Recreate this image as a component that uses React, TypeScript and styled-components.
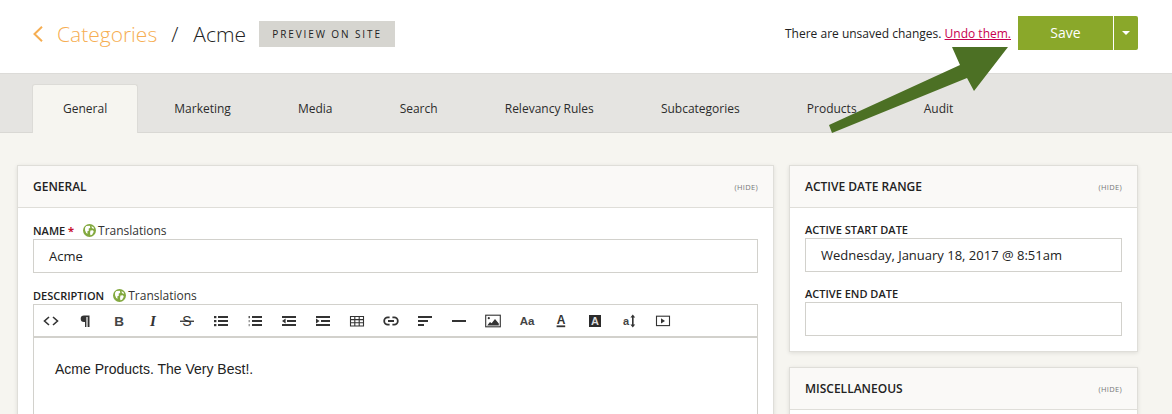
import React from 'react';
import styled, { createGlobalStyle } from 'styled-components';

const GlobalStyle = createGlobalStyle`
  html, body {
    margin: 0;
    padding: 0;
    height: 414px;
    overflow: hidden;
    background: #f6f5f0;
    font-family: "Open Sans", "Liberation Sans", sans-serif;
    color: #222;
  }
  * { box-sizing: border-box; }
`;

const TABS = ['General', 'Marketing', 'Media', 'Search', 'Relevancy Rules', 'Subcategories', 'Products', 'Audit'];

const Globe = () => (
  <GlobeSvg viewBox="0 0 14 14">
    <circle cx="7" cy="7" r="7" fill="#83a93f" />
    <path d="M3.6 2.2 7.4 2 7.8 4 6 5.2 6.4 7 4.6 8 5 10.6 3.4 9.6 2.2 6.6 2.2 4Z" fill="#fff" />
    <path d="M8 7 10.8 6.8 11.6 8.4 9.8 11.6 8 12 7.6 9.6Z" fill="#fff" />
    <path d="M9.2 2.2 11.6 3.8 11.8 5.4 9.6 4.4Z" fill="#fff" />
  </GlobeSvg>
);

const icons: React.ReactNode[] = [
  <path key="code" d="M6 4 1.5 8 6 12M10 4l4.5 4-4.5 4" fill="none" stroke="#333" strokeWidth="1.6" />,
  <path key="para" d="M12.5 2.5H7a3.3 3.3 0 0 0 0 6.6h1V14h1.4V4h1.2v10h1.9Z" fill="#333" />,
  <text key="b" x="8" y="13" textAnchor="middle" fontFamily="Liberation Sans" fontWeight="700" fontSize="13.5" fill="#444">B</text>,
  <text key="i" x="8" y="13" textAnchor="middle" fontFamily="Liberation Serif" fontWeight="700" fontStyle="italic" fontSize="15" fill="#333">I</text>,
  <g key="s">
    <text x="8" y="13" textAnchor="middle" fontFamily="Liberation Sans" fontSize="14" fill="#333">S</text>
    <rect x="1" y="7.6" width="14" height="1.3" fill="#333" />
  </g>,
  <g key="ul" fill="#333">
    <rect x="1" y="3" width="2.4" height="2.2" /><rect x="1" y="7" width="2.4" height="2.2" /><rect x="1" y="11" width="2.4" height="2.2" />
    <rect x="5" y="3" width="10" height="2" /><rect x="5" y="7" width="10" height="2" /><rect x="5" y="11" width="10" height="2" />
  </g>,
  <g key="ol" fill="#333">
    <rect x="1.6" y="3" width="1.2" height="2.2" /><rect x="1.6" y="7" width="1.2" height="2.2" opacity=".6" /><rect x="1.6" y="11" width="1.2" height="2.2" opacity=".6" />
    <rect x="5" y="3" width="10" height="2" /><rect x="5" y="7" width="10" height="2" /><rect x="5" y="11" width="10" height="2" />
  </g>,
  <g key="outdent" fill="#333">
    <rect x="1" y="3" width="14" height="2" /><rect x="6" y="7" width="9" height="2" /><rect x="1" y="11" width="14" height="2" />
    <path d="M4.6 5.6v4.8L1 8Z" />
  </g>,
  <g key="indent" fill="#333">
    <rect x="1" y="3" width="14" height="2" /><rect x="6" y="7" width="9" height="2" /><rect x="1" y="11" width="14" height="2" />
    <path d="M1 5.6v4.8L4.6 8Z" />
  </g>,
  <path key="table" d="M1.5 3.5h13v9.5h-13ZM1.5 6.6h13M1.5 9.8h13M5.8 3.5V13M10.2 3.5V13" fill="none" stroke="#333" strokeWidth="1.1" />,
  <path key="link" d="M6.6 4.4H4.8a3.6 3.6 0 0 0 0 7.2h1.8M9.4 4.4h1.8a3.6 3.6 0 0 1 0 7.2H9.4M5 8h6" fill="none" stroke="#333" strokeWidth="1.8" />,
  <g key="align" fill="#333">
    <rect x="1" y="3" width="14" height="2" /><rect x="1" y="7" width="10" height="2" /><rect x="1" y="11" width="6" height="2" />
  </g>,
  <rect key="hr" x="1" y="7" width="14" height="2" fill="#333" />,
  <g key="image">
    <rect x=".7" y="2.2" width="14.6" height="11.6" fill="none" stroke="#333" strokeWidth="1.1" />
    <circle cx="3.8" cy="5.2" r="1.1" fill="#333" />
    <path d="M2.2 12.4 5 9l1.6 1.2L10 6l3.8 4.4v2Z" fill="#333" />
  </g>,
  <text key="aa" x="8" y="12.4" textAnchor="middle" fontFamily="Liberation Sans" fontWeight="700" fontSize="11.5" fill="#444">Aa</text>,
  <g key="color">
    <text x="8" y="11" textAnchor="middle" fontFamily="Liberation Sans" fontWeight="700" fontSize="12" fill="#333">A</text>
    <rect x="3.6" y="12.4" width="8.6" height="1.8" fill="#333" />
  </g>,
  <g key="bg">
    <rect x="2" y="2" width="12" height="12" fill="#2b2b2b" />
    <text x="8" y="12" textAnchor="middle" fontFamily="Liberation Sans" fontWeight="700" fontSize="11" fill="#ddd">A</text>
  </g>,
  <g key="lineheight">
    <text x="5" y="12" textAnchor="middle" fontFamily="Liberation Sans" fontWeight="700" fontSize="11" fill="#444">a</text>
    <rect x="11" y="4" width="1.6" height="8" fill="#333" />
    <path d="M9.4 4.6 11.8 1.6l2.4 3ZM9.4 11.4l2.4 3 2.4-3Z" fill="#333" />
  </g>,
  <g key="video">
    <rect x="1.5" y="3.2" width="13" height="9.4" fill="none" stroke="#333" strokeWidth="1.1" />
    <path d="M6 5.2v5.4L10 8Z" fill="#333" />
  </g>,
];

const App: React.FC = () => {
  return (
    <Page>
      <GlobalStyle />
      <Header>
        <Breadcrumb>
          <Chevron viewBox="0 0 10 16">
            <path d="M9 .8 1.5 8 9 15.2" fill="none" stroke="#f6ae52" strokeWidth="2" />
          </Chevron>
          <CrumbLink>Categories</CrumbLink>
          <Slash>/</Slash>
          <CrumbCurrent>Acme</CrumbCurrent>
          <PreviewButton>PREVIEW ON SITE</PreviewButton>
        </Breadcrumb>
        <Actions>
          <Unsaved>
            There are unsaved changes. <UndoLink>Undo them.</UndoLink>
          </Unsaved>
          <SaveGroup>
            <SaveButton>Save</SaveButton>
            <CaretButton><Caret /></CaretButton>
          </SaveGroup>
        </Actions>
      </Header>

      <TabBar>
        {TABS.map((tab, i) => (
          <Tab key={tab} $active={i === 0}>{tab}</Tab>
        ))}
      </TabBar>

      <Content>
        <MainColumn>
          <Panel>
            <PanelHeader>
              <PanelTitle>GENERAL</PanelTitle>
              <HideLink>(HIDE)</HideLink>
            </PanelHeader>
            <PanelBody>
              <FieldLabel>
                NAME <Required>*</Required>
                <Translations><Globe />Translations</Translations>
              </FieldLabel>
              <TextInput>Acme</TextInput>
              <FieldLabel $top={14}>
                DESCRIPTION
                <Translations><Globe />Translations</Translations>
              </FieldLabel>
              <Editor>
                <Toolbar>
                  {icons.map((icon, i) => (
                    <ToolButton key={i}>
                      <ToolIcon viewBox="0 0 16 16">{icon}</ToolIcon>
                    </ToolButton>
                  ))}
                </Toolbar>
                <EditorBody>Acme Products. The Very Best!.</EditorBody>
              </Editor>
            </PanelBody>
          </Panel>
        </MainColumn>

        <SideColumn>
          <Panel>
            <PanelHeader>
              <PanelTitle>ACTIVE DATE RANGE</PanelTitle>
              <HideLink>(HIDE)</HideLink>
            </PanelHeader>
            <SidePanelBody>
              <FieldLabel>ACTIVE START DATE</FieldLabel>
              <TextInput>Wednesday, January 18, 2017 @ 8:51am</TextInput>
              <FieldLabel $top={13}>ACTIVE END DATE</FieldLabel>
              <TextInput />
            </SidePanelBody>
          </Panel>
          <Panel>
            <PanelHeader>
              <PanelTitle>MISCELLANEOUS</PanelTitle>
              <HideLink>(HIDE)</HideLink>
            </PanelHeader>
            <PanelBody />
          </Panel>
        </SideColumn>
      </Content>

      <ArrowOverlay viewBox="0 0 1172 414">
        <polygon
          points="829,125 960,65 952,47 1008,47 974,91 967,78 832,133"
          fill="#4c7024"
        />
      </ArrowOverlay>
    </Page>
  );
};

export default App;

const Page = styled.div`
  position: relative;
  width: 1172px;
  height: 414px;
  overflow: hidden;
  background: #f6f5f0;
`;

const Header = styled.header`
  height: 74px;
  padding: 16px 34px 0 33px;
  background: #fff;
  border-bottom: 1px solid #dcdbd8;
  display: flex;
  justify-content: space-between;
  align-items: flex-start;
`;

const Breadcrumb = styled.div`
  display: flex;
  align-items: center;
  height: 36px;
`;

const Chevron = styled.svg`
  width: 10px;
  height: 16px;
  margin-right: 14px;
`;

const CrumbLink = styled.span`
  font-size: 21px;
  font-weight: 300;
  color: #f6ae52;
`;

const Slash = styled.span`
  font-size: 21px;
  font-weight: 300;
  margin: 0 15px 0 14px;
  color: #222;
`;

const CrumbCurrent = styled.span`
  font-size: 21px;
  font-weight: 300;
  color: #222;
`;

const PreviewButton = styled.span`
  margin-left: 13px;
  width: 136px;
  height: 26px;
  display: flex;
  align-items: center;
  justify-content: center;
  background: #d6d5d0;
  font-size: 10px;
  font-weight: 400;
  letter-spacing: 1.9px;
  color: #222;
`;

const Actions = styled.div`
  display: flex;
  align-items: flex-start;
`;

const Unsaved = styled.span`
  font-size: 12px;
  line-height: 35px;
  color: #222;
  margin-right: 7px;
`;

const UndoLink = styled.a`
  color: #c8004f;
  text-decoration: underline;
`;

const SaveGroup = styled.div`
  display: flex;
  height: 34px;
`;

const SaveButton = styled.div`
  width: 95px;
  padding-bottom: 2px;
  background: #8aa82a;
  color: #fff;
  font-size: 14px;
  display: flex;
  align-items: center;
  justify-content: center;
`;

const CaretButton = styled.div`
  width: 24px;
  margin-left: 1px;
  background: #8aa82a;
  border-radius: 0 2px 2px 0;
  display: flex;
  align-items: center;
  justify-content: center;
`;

const Caret = styled.span`
  width: 0;
  height: 0;
  border-left: 4px solid transparent;
  border-right: 4px solid transparent;
  border-top: 4px solid #fff;
`;

const TabBar = styled.nav`
  height: 59px;
  padding: 10px 0 0 32px;
  background: #e5e4e1;
  border-bottom: 1px solid #d9d8d4;
  display: flex;
  align-items: flex-start;
`;

const Tab = styled.div<{ $active?: boolean }>`
  height: ${p => (p.$active ? '49px' : '48px')};
  padding: 0 30px;
  margin-right: 5.1px;
  border: 1px solid ${p => (p.$active ? '#dcdbd7' : 'transparent')};
  border-bottom: none;
  border-radius: 3px 3px 0 0;
  background: ${p => (p.$active ? '#f6f5f0' : 'transparent')};
  font-size: 12px;
  line-height: 47px;
  color: #2c2c2c;
  white-space: nowrap;
`;

const Content = styled.main`
  padding: 32px 34px 0 17px;
  display: flex;
  gap: 15px;
  align-items: flex-start;
`;

const MainColumn = styled.div`
  width: 757px;
  flex: none;
`;

const SideColumn = styled.div`
  width: 349px;
  flex: none;
  display: flex;
  flex-direction: column;
  gap: 15px;
`;

const Panel = styled.section`
  background: #fff;
  border: 1px solid #dfded9;
  box-shadow: 0 1px 4px rgba(0, 0, 0, 0.1);
`;

const PanelHeader = styled.div`
  height: 42px;
  padding: 0 15px;
  background: #faf9f7;
  border-bottom: 1px solid #dfded9;
  display: flex;
  align-items: center;
  justify-content: space-between;
`;

const PanelTitle = styled.h2`
  margin: 0;
  font-size: 12px;
  font-weight: 600;
  color: #222;
`;

const HideLink = styled.span`
  font-size: 7.5px;
  color: #777;
  letter-spacing: 0.3px;
`;

const PanelBody = styled.div`
  padding: 14px 15px 0;
  min-height: 200px;
`;

const SidePanelBody = styled.div`
  padding: 13px 15px 15px;
`;

const FieldLabel = styled.div<{ $top?: number }>`
  height: 17px;
  margin-top: ${p => p.$top ?? 0}px;
  font-size: 11px;
  font-weight: 600;
  line-height: 17px;
  color: #222;
  display: flex;
  align-items: center;
  white-space: pre;
`;

const Required = styled.span`
  color: #c8102e;
  font-weight: 700;
`;

const Translations = styled.span`
  margin-left: 9px;
  display: inline-flex;
  align-items: center;
  font-size: 12px;
  font-weight: 400;
  color: #333;
`;

const GlobeSvg = styled.svg`
  width: 13px;
  height: 13px;
  margin-right: 2px;
`;

const TextInput = styled.div`
  height: 34px;
  padding: 0 15px;
  border: 1px solid #d2d1cc;
  background: #fff;
  font-size: 13px;
  line-height: 32px;
  color: #222;
`;

const Editor = styled.div`
  border: 1px solid #d2d1cc;
  background: #fff;
  min-height: 200px;
`;

const Toolbar = styled.div`
  height: 33px;
  padding-top: 1px;
  display: flex;
  align-items: center;
  border-bottom: 2px solid #d2d1cc;
`;

const ToolButton = styled.div`
  width: 34px;
  height: 100%;
  display: flex;
  align-items: center;
  justify-content: center;
`;

const ToolIcon = styled.svg`
  width: 16px;
  height: 16px;
  overflow: visible;
`;

const EditorBody = styled.div`
  padding: 21px;
  font-family: "Liberation Sans", Arial, sans-serif;
  font-size: 14px;
  line-height: 20px;
  color: #222;
`;

const ArrowOverlay = styled.svg`
  position: absolute;
  left: 0;
  top: 0;
  width: 1172px;
  height: 414px;
  pointer-events: none;
`;
